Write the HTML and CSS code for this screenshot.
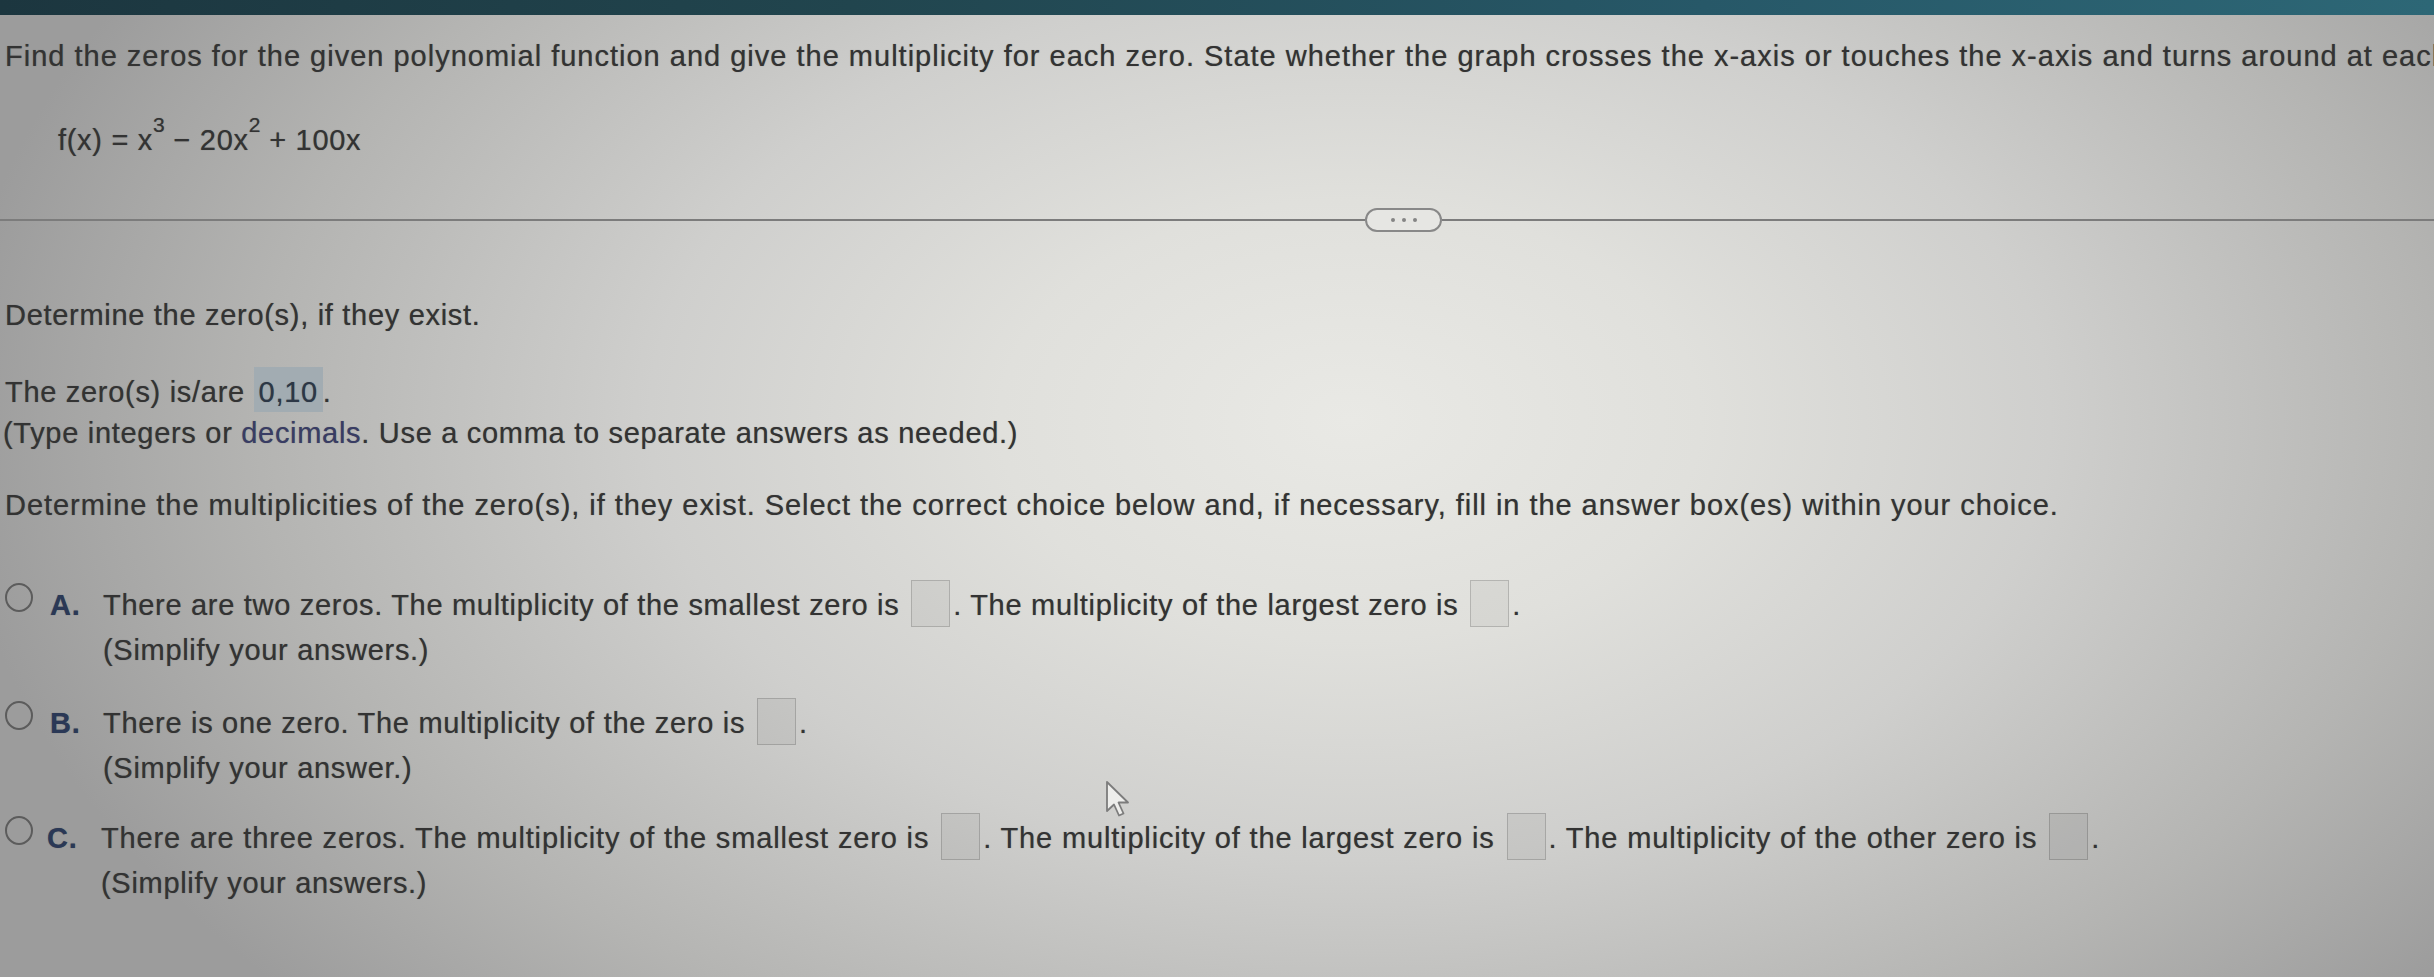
FILE: index.html
```html
<!DOCTYPE html>
<html lang="en">
<head>
<meta charset="utf-8">
<title>Polynomial zeros and multiplicity</title>
<link rel="stylesheet" href="styles.css">
</head>
<body>
<div class="topbar"></div>
<main class="page">
  <p class="line1">Find the zeros for the given polynomial function and give the multiplicity for each zero. State whether the graph crosses the x-axis or touches the x-axis and turns around at each zero.</p>
  <p class="func">f(x) = x<sup>3</sup> − 20x<sup>2</sup> + 100x</p>
  <div class="divider"><span class="pill"><i></i><i></i><i></i></span></div>
  <p class="step">Determine the zero(s), if they exist.</p>
  <p class="answer-line">The zero(s) is/are <span class="filled">0,10</span>.</p>
  <p class="hint">(Type integers or <span class="dec">decimals</span>. Use a comma to separate answers as needed.)</p>
  <p class="step2">Determine the multiplicities of the zero(s), if they exist. Select the correct choice below and, if necessary, fill in the answer box(es) within your choice.</p>
  <ul class="choices">
    <li class="choice choice-a">
      <span class="radio"></span><span class="letter">A.</span>
      <div class="cbody">
        <p>There are two zeros. The multiplicity of the smallest zero is <span class="box"></span>. The multiplicity of the largest zero is <span class="box"></span>.</p>
        <p class="simp">(Simplify your answers.)</p>
      </div>
    </li>
    <li class="choice choice-b">
      <span class="radio"></span><span class="letter">B.</span>
      <div class="cbody">
        <p>There is one zero. The multiplicity of the zero is <span class="box"></span>.</p>
        <p class="simp">(Simplify your answer.)</p>
      </div>
    </li>
    <li class="choice choice-c">
      <span class="radio"></span><span class="letter">C.</span>
      <div class="cbody">
        <p class="wide">There are three zeros. The multiplicity of the smallest zero is <span class="box"></span>. The multiplicity of the largest zero is <span class="box"></span>. The multiplicity of the other zero is <span class="box"></span>.</p>
        <p class="simp">(Simplify your answers.)</p>
      </div>
    </li>
  </ul>
</main>
<svg class="cursor" width="26" height="38" viewBox="0 0 26 38" aria-hidden="true">
  <path d="M2 2 L2 31 L9 24.5 L14 35.5 L18.5 33.5 L13.5 22.5 L23 22.5 Z" fill="#eeeeec" stroke="#7c7c7c" stroke-width="1.8" stroke-linejoin="round"/>
</svg>
</body>
</html>
```

FILE: styles.css
```css
html, body {
  margin: 0;
  padding: 0;
}

body {
  width: 2434px;
  height: 977px;
  overflow: hidden;
  position: relative;
  font-family: "Liberation Sans", Arial, sans-serif;
  font-size: 29px;
  line-height: 36px;
  letter-spacing: 0.7px;
  color: #333333;
  text-shadow: 0 0 0.8px rgba(40, 40, 40, 0.55);
  background:
    radial-gradient(ellipse 1400px 880px at 1350px 420px, #e9e9e5 0%, #e0e0dc 25%, #cfcfcd 50%, #b4b4b2 78%, #9c9c9c 100%);
}

p {
  margin: 0;
}

.topbar {
  height: 15px;
  background: linear-gradient(90deg, #1c363f 0%, #21454e 35%, #275868 70%, #2d6776 100%);
}

.page {
  padding-left: 5px;
  white-space: nowrap;
}

.line1 {
  margin-top: 23px;
  letter-spacing: 1px;
}

.func {
  margin-top: 48px;
  padding-left: 53px;
}

.func sup {
  font-size: 21px;
  line-height: 0;
  vertical-align: 18px;
  letter-spacing: 0;
}

.divider {
  display: flex;
  align-items: center;
  height: 24px;
  margin-top: 50px;
  margin-left: -5px;
}

.divider::before,
.divider::after {
  content: "";
  height: 2px;
  background: #7c7c7c;
}

.divider::before {
  width: 1365px;
}

.divider::after {
  flex: 1;
}

.pill {
  box-sizing: border-box;
  width: 77px;
  height: 24px;
  border: 2px solid #888888;
  border-radius: 12px;
  background: #e6e6e3;
  display: flex;
  align-items: center;
  justify-content: center;
  gap: 7px;
}

.pill i {
  width: 4px;
  height: 4px;
  border-radius: 50%;
  background: #858585;
}

.step {
  margin-top: 65px;
}

.answer-line {
  margin-top: 41px;
}

.filled {
  padding: 9px 5px 4px 5px;
  background: #a2acb2;
  color: #2c3746;
}

.hint {
  margin-top: 5px;
  margin-left: -2px;
}

.dec {
  color: #383c64;
}

.step2 {
  margin-top: 36px;
  letter-spacing: 0.95px;
}

.choices {
  list-style: none;
  margin: 64px 0 0 0;
  padding: 0;
}

.choice {
  display: flex;
  align-items: flex-start;
}

.choice-b {
  margin-top: 37px;
}

.choice-c {
  margin-top: 34px;
}

.radio {
  box-sizing: border-box;
  flex: none;
  width: 28px;
  height: 29px;
  margin-top: -4px;
  border: 2.5px solid #5c5c5c;
  border-radius: 50%;
}

.letter {
  flex: none;
  width: 53px;
  margin-left: 17px;
  font-weight: bold;
  color: #2a3856;
}

.choice-c .letter {
  margin-left: 14px;
  width: 54px;
}

.cbody {
  display: flex;
  flex-direction: column;
}

.wide {
  letter-spacing: 0.85px;
}

.simp {
  margin-top: 9px;
}

.box {
  display: inline-block;
  box-sizing: border-box;
  width: 39px;
  height: 47px;
  margin: -10px 3px -12px 3px;
  vertical-align: baseline;
  background: rgba(0, 0, 0, 0.045);
  border: 1.5px solid rgba(0, 0, 0, 0.16);
}

.cursor {
  position: absolute;
  left: 1105px;
  top: 780px;
}
```
